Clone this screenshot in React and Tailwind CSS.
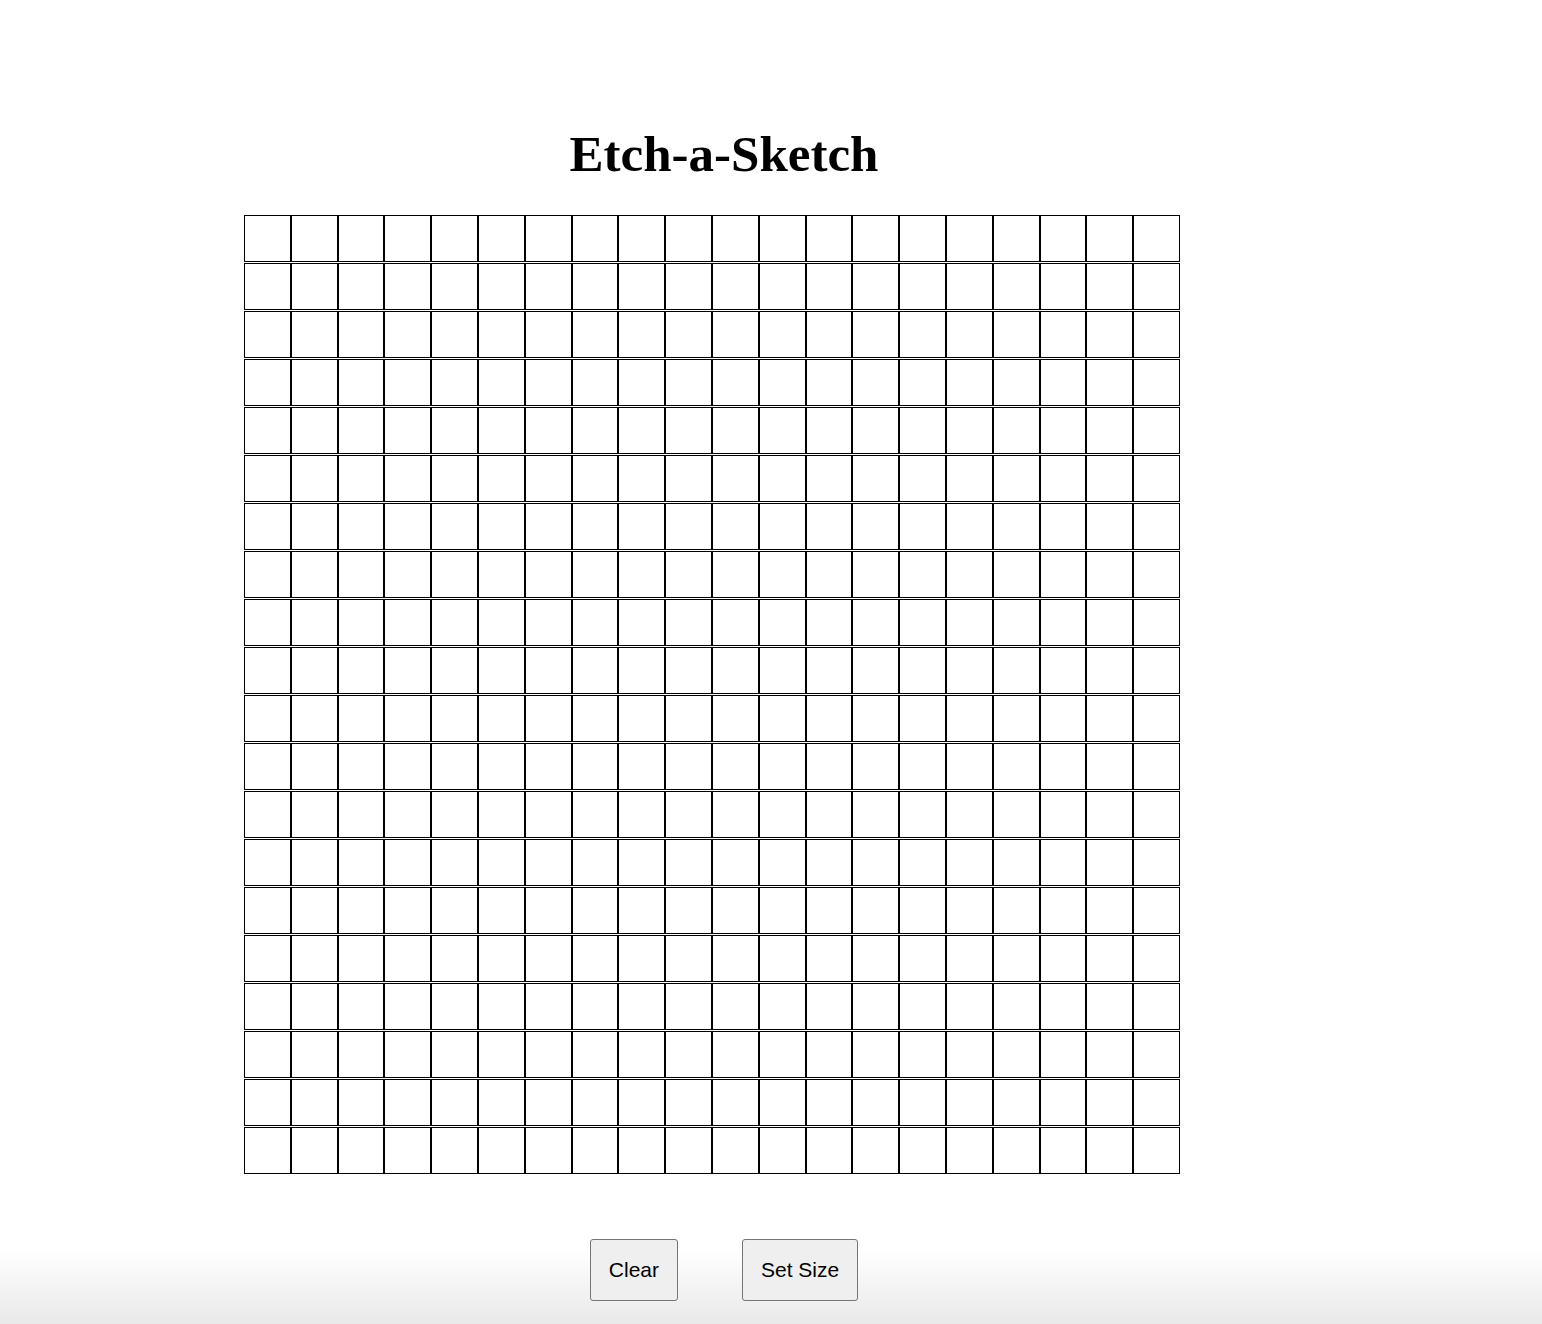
import React from 'react';

const SIZE = 20;

export default function App() {
  const rows = Array.from({ length: SIZE }, (_, r) => r);
  const cols = Array.from({ length: SIZE }, (_, c) => c);

  return (
    <div className="min-h-[1324px] bg-[linear-gradient(to_bottom,#ffffff_0px,#ffffff_1250px,#e9e9e9_1324px)]">
      <div className="w-[1448px] flex flex-col">
        <h1
          className="mt-[129px] text-center text-[51px] leading-[51px] font-bold text-black"
          style={{ fontFamily: '"Liberation Serif", "Times New Roman", serif' }}
        >
          Etch-a-Sketch
        </h1>

        <div className="mt-[35px] ml-[244px] w-[936px] flex flex-col gap-[1.2px]">
          {rows.map(r => (
            <div key={r} className="flex">
              {cols.map(c => (
                <div key={c} className="flex-1 h-[46.8px] border border-black bg-white" />
              ))}
            </div>
          ))}
        </div>

        <div
          className="mt-[65px] flex justify-center gap-[64px]"
          style={{ fontFamily: '"Liberation Sans", Arial, sans-serif' }}
        >
          <button className="px-[18px] py-[18px] text-[21px] leading-[24px] text-black bg-[#efefef] border border-[#767676] rounded-[3px]">
            Clear
          </button>
          <button className="px-[18px] py-[18px] text-[21px] leading-[24px] text-black bg-[#efefef] border border-[#767676] rounded-[3px]">
            Set Size
          </button>
        </div>
      </div>
    </div>
  );
}
